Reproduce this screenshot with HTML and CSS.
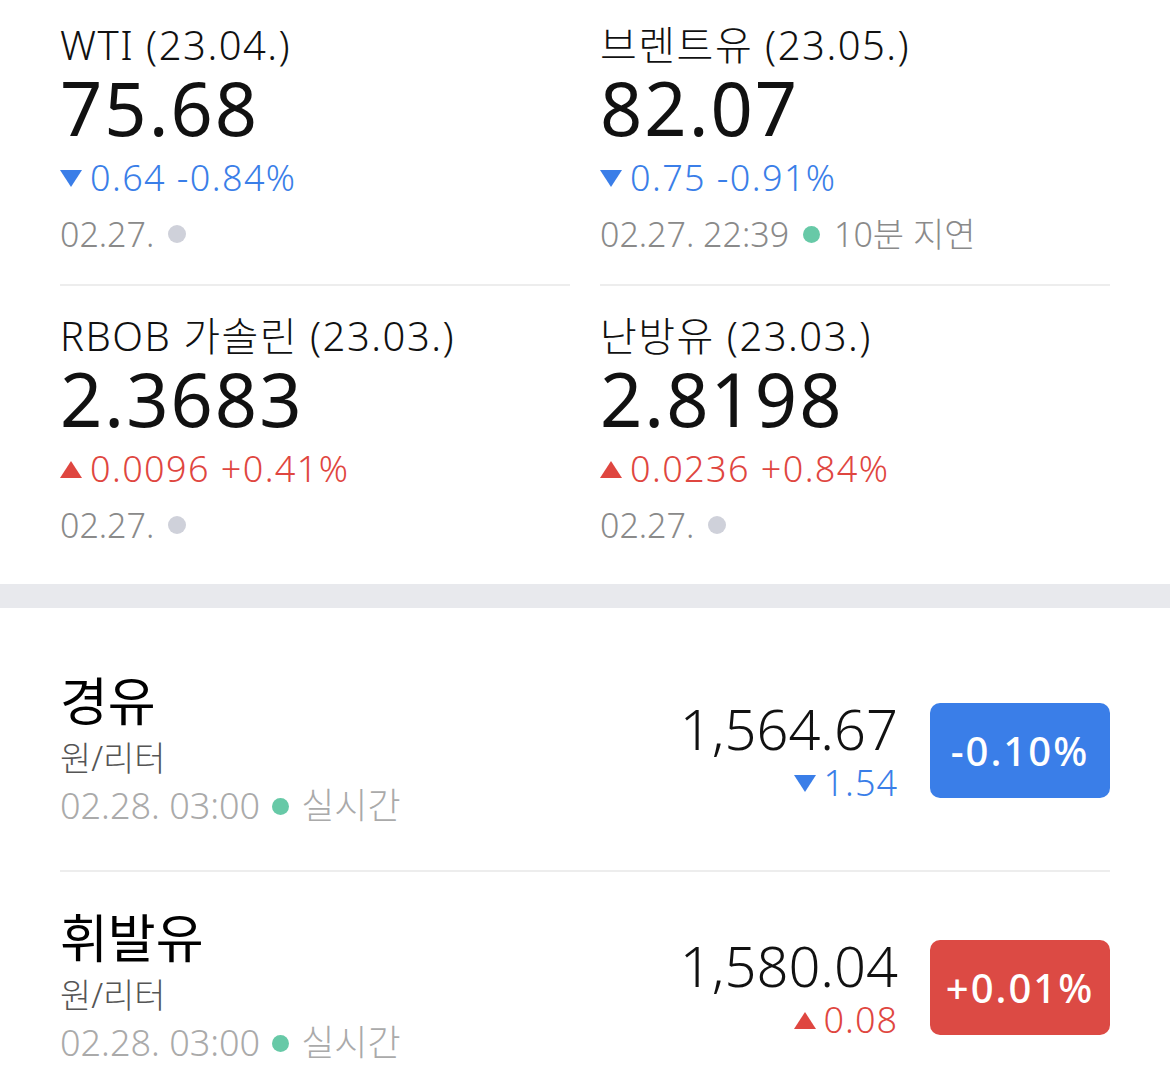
FILE: index.html
```html
<!DOCTYPE html>
<html lang="ko">
<head>
  <meta charset="UTF-8">
  <title>국제유가</title>
  <link rel="stylesheet" href="styles.css">
</head>
<body>

<div class="futures">
  <div class="futures-row">
    <div class="quote">
      <div class="quote-name">WTI (23.04.)</div>
      <div class="quote-price">75.68</div>
      <div class="quote-change down">0.64 -0.84%</div>
      <div class="quote-time">02.27. <span class="dot"></span></div>
    </div>
    <div class="quote">
      <div class="quote-name">브렌트유 (23.05.)</div>
      <div class="quote-price">82.07</div>
      <div class="quote-change down">0.75 -0.91%</div>
      <div class="quote-time">02.27. 22:39 <span class="dot live"></span> 10분 지연</div>
    </div>
  </div>
  <div class="futures-row">
    <div class="quote">
      <div class="quote-name">RBOB 가솔린 (23.03.)</div>
      <div class="quote-price">2.3683</div>
      <div class="quote-change up">0.0096 +0.41%</div>
      <div class="quote-time">02.27. <span class="dot"></span></div>
    </div>
    <div class="quote">
      <div class="quote-name">난방유 (23.03.)</div>
      <div class="quote-price">2.8198</div>
      <div class="quote-change up">0.0236 +0.84%</div>
      <div class="quote-time">02.27. <span class="dot"></span></div>
    </div>
  </div>
</div>

<div class="band"></div>

<div class="fuel-list">
  <div class="fuel">
    <div class="fuel-info">
      <div class="fuel-name">경유</div>
      <div class="fuel-unit">원/리터</div>
      <div class="fuel-time">02.28. 03:00 <span class="dot live"></span> 실시간</div>
    </div>
    <div class="fuel-value">
      <div class="fuel-price">1,564.67</div>
      <div class="fuel-change down">1.54</div>
    </div>
    <div class="badge badge-down">-0.10%</div>
  </div>
  <div class="fuel">
    <div class="fuel-info">
      <div class="fuel-name">휘발유</div>
      <div class="fuel-unit">원/리터</div>
      <div class="fuel-time">02.28. 03:00 <span class="dot live"></span> 실시간</div>
    </div>
    <div class="fuel-value">
      <div class="fuel-price">1,580.04</div>
      <div class="fuel-change up">0.08</div>
    </div>
    <div class="badge badge-up">+0.01%</div>
  </div>
</div>

</body>
</html>
```

FILE: styles.css
```css
body {
  margin: 0;
  font-family: "Noto Sans", "Noto Sans CJK KR", sans-serif;
  font-weight: 300;
  background-color: #fff;
  color: #111;
}

/* 해외 선물 */
.futures {
  padding: 0 60px;
}

.futures-row {
  display: grid;
  grid-template-columns: 1fr 1fr;
  column-gap: 30px;
}

.quote {
  padding: 20px 0 25px;
  border-bottom: 2px solid #ededed;
}

.futures-row + .futures-row .quote {
  padding: 25px 0 34px;
  border-bottom: none;
}

.quote-name {
  font-size: 40px;
  line-height: 50px;
  letter-spacing: 1.5px;
}

.quote-price {
  font-size: 74px;
  line-height: 76px;
  font-weight: 400;
  letter-spacing: 2px;
}

.quote-change {
  margin-top: 7px;
  font-size: 36px;
  line-height: 50px;
  letter-spacing: 1.4px;
}

.quote-time {
  margin-top: 6px;
  font-size: 34px;
  line-height: 50px;
  color: #8a8a8a;
  display: flex;
  align-items: center;
  gap: 14px;
}

.down { color: #3a7ee8; }
.up { color: #df4640; }

.down::before,
.up::before {
  content: "";
  display: inline-block;
  width: 0;
  height: 0;
  margin-right: 8px;
  border-left: 11px solid transparent;
  border-right: 11px solid transparent;
  vertical-align: 4px;
}

.down::before {
  border-top: 17px solid #3a7ee8;
}

.up::before {
  border-bottom: 17px solid #df4640;
}

.dot {
  display: inline-block;
  width: 18px;
  height: 18px;
  border-radius: 50%;
  background-color: #cfd1da;
}

.dot.live {
  width: 17px;
  height: 17px;
  background-color: #67c9a7;
}

.band {
  height: 24px;
  background-color: #e8e9ed;
}

/* 국내 유가 */
.fuel-list {
  padding: 27px 60px 0;
}

.fuel {
  display: flex;
  align-items: center;
  padding: 36px 0 40px;
  border-bottom: 2px solid #ededed;
}

.fuel:last-child {
  border-bottom: none;
}

.fuel-info {
  flex: 1;
}

.fuel-name {
  font-size: 52px;
  line-height: 60px;
  font-weight: 400;
  color: #000;
}

.fuel-unit {
  margin-top: 3px;
  font-size: 34px;
  line-height: 48px;
  color: #555;
}

.fuel-time {
  font-size: 36px;
  line-height: 48px;
  color: #aaa;
  display: flex;
  align-items: center;
  gap: 12px;
}

.fuel-value {
  text-align: right;
  margin-right: 32px;
}

.fuel-price {
  font-size: 56px;
  line-height: 62px;
}

.fuel-change {
  margin-top: 3px;
  font-size: 36px;
  line-height: 42px;
  letter-spacing: 1px;
}

.badge {
  width: 180px;
  height: 95px;
  border-radius: 10px;
  display: flex;
  justify-content: center;
  align-items: center;
  color: #fff;
  font-size: 40px;
  font-weight: 500;
  letter-spacing: 2px;
}

.badge-down { background-color: #3a7ee8; }
.badge-up { background-color: #dc4a44; }
```
